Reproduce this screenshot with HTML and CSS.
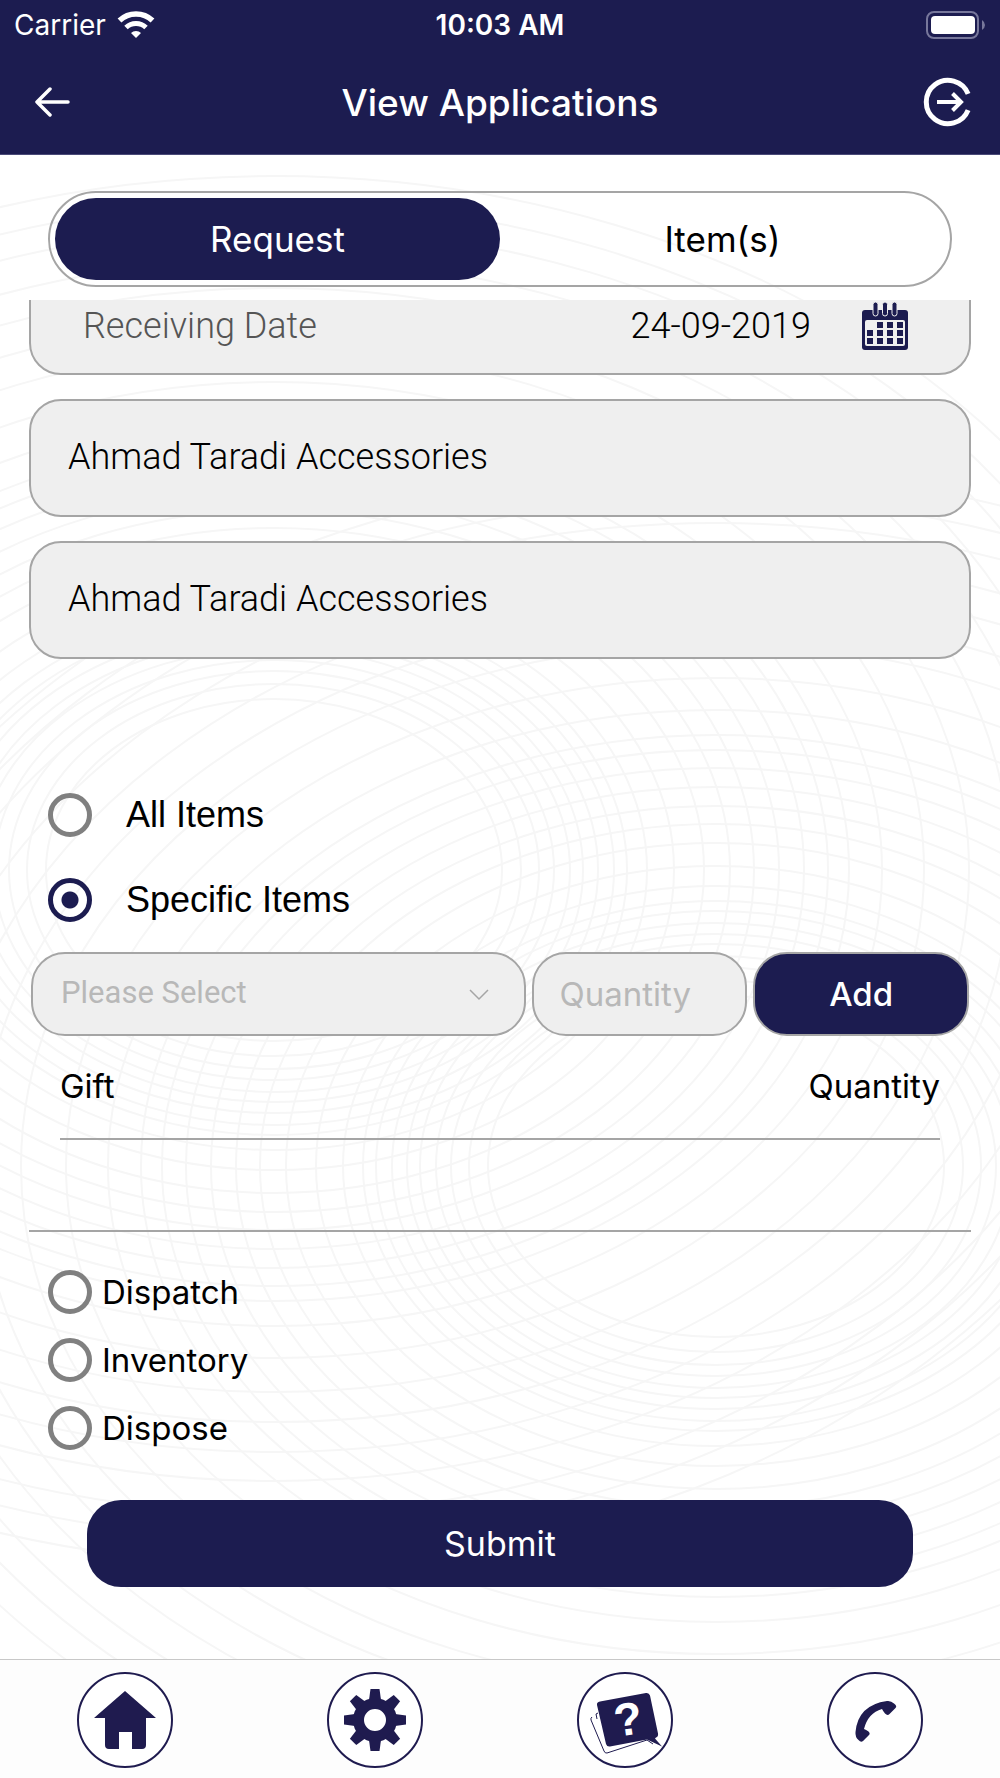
FILE: index.html
```
<!DOCTYPE html>
<html lang="en">
<head>
    <meta charset="UTF-8">
    <meta name="viewport" content="width=device-width, initial-scale=1">
    <title>View Applications</title>
    <link rel="stylesheet" href="styles.css">
</head>
<body>
<!-- background rings -->
<svg class="rings" viewBox="0 0 1000 1778" preserveAspectRatio="xMidYMid slice" aria-hidden="true">
    <defs>
        <g id="ringSet">
            <ellipse rx="228" ry="171"/>
            <ellipse rx="247" ry="186"/>
            <ellipse rx="265" ry="199"/>
            <ellipse rx="280" ry="210"/>
            <ellipse rx="296" ry="222"/>
            <ellipse rx="309" ry="232"/>
            <ellipse rx="324" ry="243"/>
            <ellipse rx="340" ry="255"/>
            <ellipse rx="353" ry="265"/>
            <ellipse rx="373" ry="280"/>
            <ellipse rx="400" ry="300"/>
            <ellipse rx="430" ry="323"/>
            <ellipse rx="456" ry="342"/>
            <ellipse rx="480" ry="360"/>
            <ellipse rx="505" ry="379"/>
            <ellipse rx="530" ry="398"/>
            <ellipse rx="554" ry="416"/>
            <ellipse rx="575" ry="431"/>
            <ellipse rx="608" ry="456"/>
            <ellipse rx="650" ry="488"/>
            <ellipse rx="695" ry="522"/>
            <ellipse rx="736" ry="552"/>
            <ellipse rx="776" ry="582"/>
            <ellipse rx="814" ry="611"/>
            <ellipse rx="857" ry="643"/>
            <ellipse rx="890" ry="668"/>
            <ellipse rx="925" ry="694"/>
        </g>
    </defs>
    <use href="#ringSet" x="274" y="870"/>
    <use href="#ringSet" x="716" y="1166"/>
</svg>

<header class="header">
    <div class="status">
        <div class="carrier">
            <span>Carrier</span>
            <svg width="38" height="28" viewBox="0 0 38 28" aria-hidden="true">
                <path d="M19 27l-5-5a7 7 0 0 1 10 0z" fill="#fff"/>
                <path d="M9 16.500a14.500 14.500 0 0 1 20 0" fill="none" stroke="#fff" stroke-width="5"/>
                <path d="M2.500 9.500a24 24 0 0 1 33 0" fill="none" stroke="#fff" stroke-width="5.500"/>
            </svg>
        </div>
        <span class="time">10:03 AM</span>
        <svg class="battery" width="60" height="28" viewBox="0 0 60 28" aria-hidden="true">
            <rect x="1" y="1" width="51" height="26" rx="7" fill="none" stroke="#77779b" stroke-width="2"/>
            <rect x="5" y="5" width="44" height="18" rx="4" fill="#fff"/>
            <path d="M56 9q3 2 3 5t-3 5z" fill="#77779b"/>
        </svg>
    </div>
    <div class="nav">
        <a href="#" class="back" aria-label="Back">
            <svg width="36" height="30" viewBox="0 0 36 30">
                <path d="M15 2L2 15l13 13M2 15h31" fill="none" stroke="#fff" stroke-width="3.500" stroke-linecap="round" stroke-linejoin="round"/>
            </svg>
        </a>
        <h1 class="title">View Applications</h1>
        <a href="#" class="logout" aria-label="Log out">
            <svg width="50" height="50" viewBox="0 0 50 50">
                <path d="M45.100 16.900a21.700 21.700 0 1 0 0 16.200" fill="none" stroke="#fff" stroke-width="5"/>
                <path d="M14 25h23M29.500 16.500l8.500 8.500-8.500 8.500" fill="none" stroke="#fff" stroke-width="4"/>
            </svg>
        </a>
    </div>
</header>

<main class="main">
    <div class="tabs">
        <button type="button" class="tab on">Request</button>
        <button type="button" class="tab">Item(s)</button>
    </div>

    <div class="panel">
        <form class="form">
            <div class="field dateField">
                <label for="receivingDate">Receiving Date</label>
                <input type="text" id="receivingDate" value="24-09-2019">
                <button type="button" class="calendar" aria-label="Pick a date">
                    <svg width="48" height="50" viewBox="0 0 48 50">
                        <rect x="1" y="9" width="46" height="40" rx="3" fill="#1c1c50"/>
                        <rect x="4" y="19" width="40" height="26" rx="2" fill="#efefef"/>
                        <g fill="#1c1c50" stroke="#efefef">
                            <rect x="12" y="1" width="5" height="14" rx="2.500"/>
                            <rect x="21.500" y="1" width="5" height="14" rx="2.500"/>
                            <rect x="31" y="1" width="5" height="14" rx="2.500"/>
                        </g>
                        <path d="M16 21h6v6h-6zM26 21h6v6h-6zM36 21h6v6h-6zM6 29h6v6H6zM16 29h6v6h-6zM26 29h6v6h-6zM36 29h6v6h-6zM6 37h6v6H6zM16 37h6v6h-6zM26 37h6v6h-6zM36 37h6v6h-6z" fill="#1c1c50"/>
                    </svg>
                </button>
            </div>
            <input type="text" class="field" aria-label="Supplier" value="Ahmad Taradi Accessories">
            <input type="text" class="field" aria-label="Recipient" value="Ahmad Taradi Accessories">

            <div class="scope">
                <label class="radio"><input type="radio" name="scope">All Items</label>
                <label class="radio"><input type="radio" name="scope" checked>Specific Items</label>
            </div>

            <div class="addRow">
                <div class="select">
                    <select aria-label="Gift">
                        <option>Please Select</option>
                    </select>
                    <svg width="20" height="12" viewBox="0 0 20 12" aria-hidden="true">
                        <path d="M1 1l9 9 9-9" fill="none" stroke="#a5a5a5" stroke-width="1.500"/>
                    </svg>
                </div>
                <input type="text" class="quantity" aria-label="Quantity" placeholder="Quantity">
                <button type="button" class="add">Add</button>
            </div>

            <table class="gifts">
                <thead>
                <tr>
                    <th>Gift</th>
                    <th>Quantity</th>
                </tr>
                </thead>
            </table>

            <div class="actions">
                <label class="radio"><input type="radio" name="action">Dispatch</label>
                <label class="radio"><input type="radio" name="action">Inventory</label>
                <label class="radio"><input type="radio" name="action">Dispose</label>
            </div>

            <button type="submit" class="submit">Submit</button>
        </form>
    </div>
</main>

<nav class="footer">
    <a href="#" aria-label="Home">
        <svg width="96" height="96" viewBox="0 0 96 96">
            <circle cx="48" cy="48" r="47"/>
            <path d="M48 19l31 27H69v27q0 4-4 4H55V60H42v17H32q-4 0-4-4V46H17z"/>
        </svg>
    </a>
    <a href="#" aria-label="Settings">
        <svg width="96" height="96" viewBox="0 0 96 96">
            <defs>
                <path id="tooth" d="M42 28l1.500-11h9L54 28z"/>
            </defs>
            <circle cx="48" cy="48" r="47"/>
            <path fill-rule="evenodd" d="M48 26a22 22 0 1 0 0 44 22 22 0 1 0 0-44zm0 11a11 11 0 1 1 0 22 11 11 0 1 1 0-22z"/>
            <use href="#tooth"/>
            <use href="#tooth" transform="rotate(45 48 48)"/>
            <use href="#tooth" transform="rotate(90 48 48)"/>
            <use href="#tooth" transform="rotate(135 48 48)"/>
            <use href="#tooth" transform="rotate(180 48 48)"/>
            <use href="#tooth" transform="rotate(225 48 48)"/>
            <use href="#tooth" transform="rotate(270 48 48)"/>
            <use href="#tooth" transform="rotate(315 48 48)"/>
        </svg>
    </a>
    <a href="#" aria-label="Help">
        <svg width="96" height="96" viewBox="0 0 96 96">
            <circle cx="48" cy="48" r="47"/>
            <path d="M23 29.500L69 21q3-.5 4 2.500l8 38q.5 3-2 4l-1 1 7 8-15-7-37 7q-3 .5-4-2.500L20 33q-.5-3 3-3.500z"/>
            <path class="line" d="M15 45q-1.500 1-1 3l13 31q1 2.500 3 2l40-13 6 4M21 41l-2 1 1 5"/>
            <text x="51" y="63" transform="rotate(-8 51 48)">?</text>
        </svg>
    </a>
    <a href="#" aria-label="Call">
        <svg width="96" height="96" viewBox="0 0 96 96">
            <circle cx="48" cy="48" r="47"/>
            <path d="M60 29q4-.5 7 2.500 3.500 2.500 1.500 4.500l-6 6q-2 2-4.500-.5Q56 39 55 37q-14 4-18 20 2 .5 4.500 2.500 2 2 .5 3.500l-6 6q-2 2-4.500-1Q28 65 28.500 60 31 33 60 29z"/>
        </svg>
    </a>
</nav>
</body>
</html>
```

FILE: styles.css
```
* {
    box-sizing: border-box;
}

body, h1, form {
    margin: 0;
    padding: 0;
}

body {
    position: relative;
    display: flex;
    flex-direction: column;
    min-height: 100vh;
    font-family: Inter, "Liberation Sans", sans-serif;
    font-size: 33px;
    color: #000;
    background: #fff;
}

button, input, select {
    margin: 0;
    font: inherit;
    color: inherit;
}

button {
    padding: 0;
    border: none;
    background: none;
    cursor: pointer;
}

svg {
    display: block;
}

.rings {
    position: absolute;
    top: 0;
    left: 0;
    z-index: -1;
    width: 100%;
    height: 100%;
    fill: none;
    stroke: #f6f6f6;
    stroke-width: 2;
}

/* header */
.header {
    color: #fff;
    background: #1c1c50;
    border-bottom: 1px solid #4a4a78;
}

.status, .nav {
    display: grid;
    grid-template-columns: 1fr auto 1fr;
    align-items: center;
}

.status {
    height: 50px;
    padding: 0 14px;
    font-size: 28px;
}

.carrier {
    display: flex;
    align-items: center;
    gap: 11px;
}

.time {
    font-weight: 600;
}

.battery {
    justify-self: end;
}

.nav {
    height: 104px;
    padding: 0 27px;
}

.title {
    font-size: 37px;
    font-weight: 500;
}

.back {
    margin-left: 8px;
}

.logout {
    justify-self: end;
}

/* tabs */
.main {
    flex: 1;
    padding-top: 36px;
}

.tabs {
    display: flex;
    margin: 0 48px 13px;
    padding: 5px;
    border: 2px solid #a5a5a5;
    border-radius: 48px;
}

.tab {
    flex: 1;
    height: 82px;
    border-radius: 41px;
    font-size: 35px;
}

.tab.on {
    color: #fff;
    background: #1c1c50;
}

/* form, its first field is scrolled partly out of the panel */
.panel {
    overflow: hidden;
}

.form {
    display: flex;
    flex-direction: column;
    gap: 24px;
    margin-top: -43px;
    padding: 0 29px 72px;
}

.field {
    width: 100%;
    height: 118px;
    padding: 0 37px 2px;
    border: 2px solid #a5a5a5;
    border-radius: 32px;
    font-family: Roboto, "Liberation Sans", sans-serif;
    font-size: 36px;
    font-weight: 300;
    background: #efefef;
}

.dateField {
    display: flex;
    align-items: center;
    padding: 20px 60px 0 52px;
}

.dateField label {
    flex: 1;
    color: #555;
}

.dateField input {
    width: 200px;
    padding: 0;
    border: none;
    background: none;
    text-align: right;
}

.calendar {
    margin-left: 50px;
}

.radio {
    display: flex;
    align-items: center;
}

.radio input {
    width: 44px;
    height: 44px;
    border: 5px solid #808080;
    border-radius: 50%;
    appearance: none;
}

.radio input:checked {
    border-color: #1c1c50;
    background: radial-gradient(circle, #1c1c50 8px, transparent 9px);
}

.scope {
    display: flex;
    flex-direction: column;
    gap: 41px;
    padding: 110px 19px 6px;
    font-family: "Liberation Sans", Arial, sans-serif;
    font-size: 36px;
}

.scope .radio {
    gap: 34px;
}

.addRow {
    display: flex;
    gap: 6px;
    margin: 0 2px;
}

.select, .quantity, .add {
    height: 84px;
    border: 2px solid #a5a5a5;
    border-radius: 34px;
}

.select {
    position: relative;
    flex: 1;
    background: #efefef;
}

.select select {
    width: 100%;
    height: 100%;
    padding: 0 60px 4px 28px;
    border: none;
    border-radius: inherit;
    appearance: none;
    font-family: Roboto, "Liberation Sans", sans-serif;
    font-size: 31px;
    color: #b8b8b8;
    background: none;
}

.select svg {
    position: absolute;
    top: 35px;
    right: 35px;
    pointer-events: none;
}

.quantity, .add {
    width: 23%;
}

.quantity {
    padding: 0 26px;
    background: #efefef;
}

.quantity::placeholder {
    color: #b8b8b8;
    opacity: 1;
}

.add {
    color: #fff;
    font-weight: 500;
    background: #1c1c50;
}

.gifts {
    margin: 0 31px 66px;
    border-collapse: collapse;
}

.gifts th {
    height: 79px;
    padding: 0 0 26px;
    border-bottom: 2px solid #a5a5a5;
    font-weight: 400;
    text-align: left;
}

.gifts th:last-child {
    text-align: right;
}

.actions {
    display: flex;
    flex-direction: column;
    gap: 24px;
    padding: 38px 19px 26px;
    border-top: 2px solid #a5a5a5;
}

.actions .radio {
    gap: 10px;
}

.submit {
    height: 87px;
    margin: 0 58px;
    border-radius: 34px;
    font-size: 34px;
    color: #fff;
    background: #1c1c50;
}

/* bottom bar */
.footer {
    display: grid;
    grid-template-columns: repeat(4, 1fr);
    justify-items: center;
    padding: 12px 0 10px;
    border-top: 1px solid #c8c8c8;
    background: #fdfdfd;
}

.footer svg {
    fill: #1f1b4f;
}

.footer circle {
    fill: #fff;
    stroke: #1f1b4f;
    stroke-width: 2;
}

.footer .line {
    fill: none;
    stroke: #1f1b4f;
}

.footer text {
    font-family: "Liberation Sans", sans-serif;
    font-size: 46px;
    font-weight: 700;
    fill: #fff;
    text-anchor: middle;
}
```
